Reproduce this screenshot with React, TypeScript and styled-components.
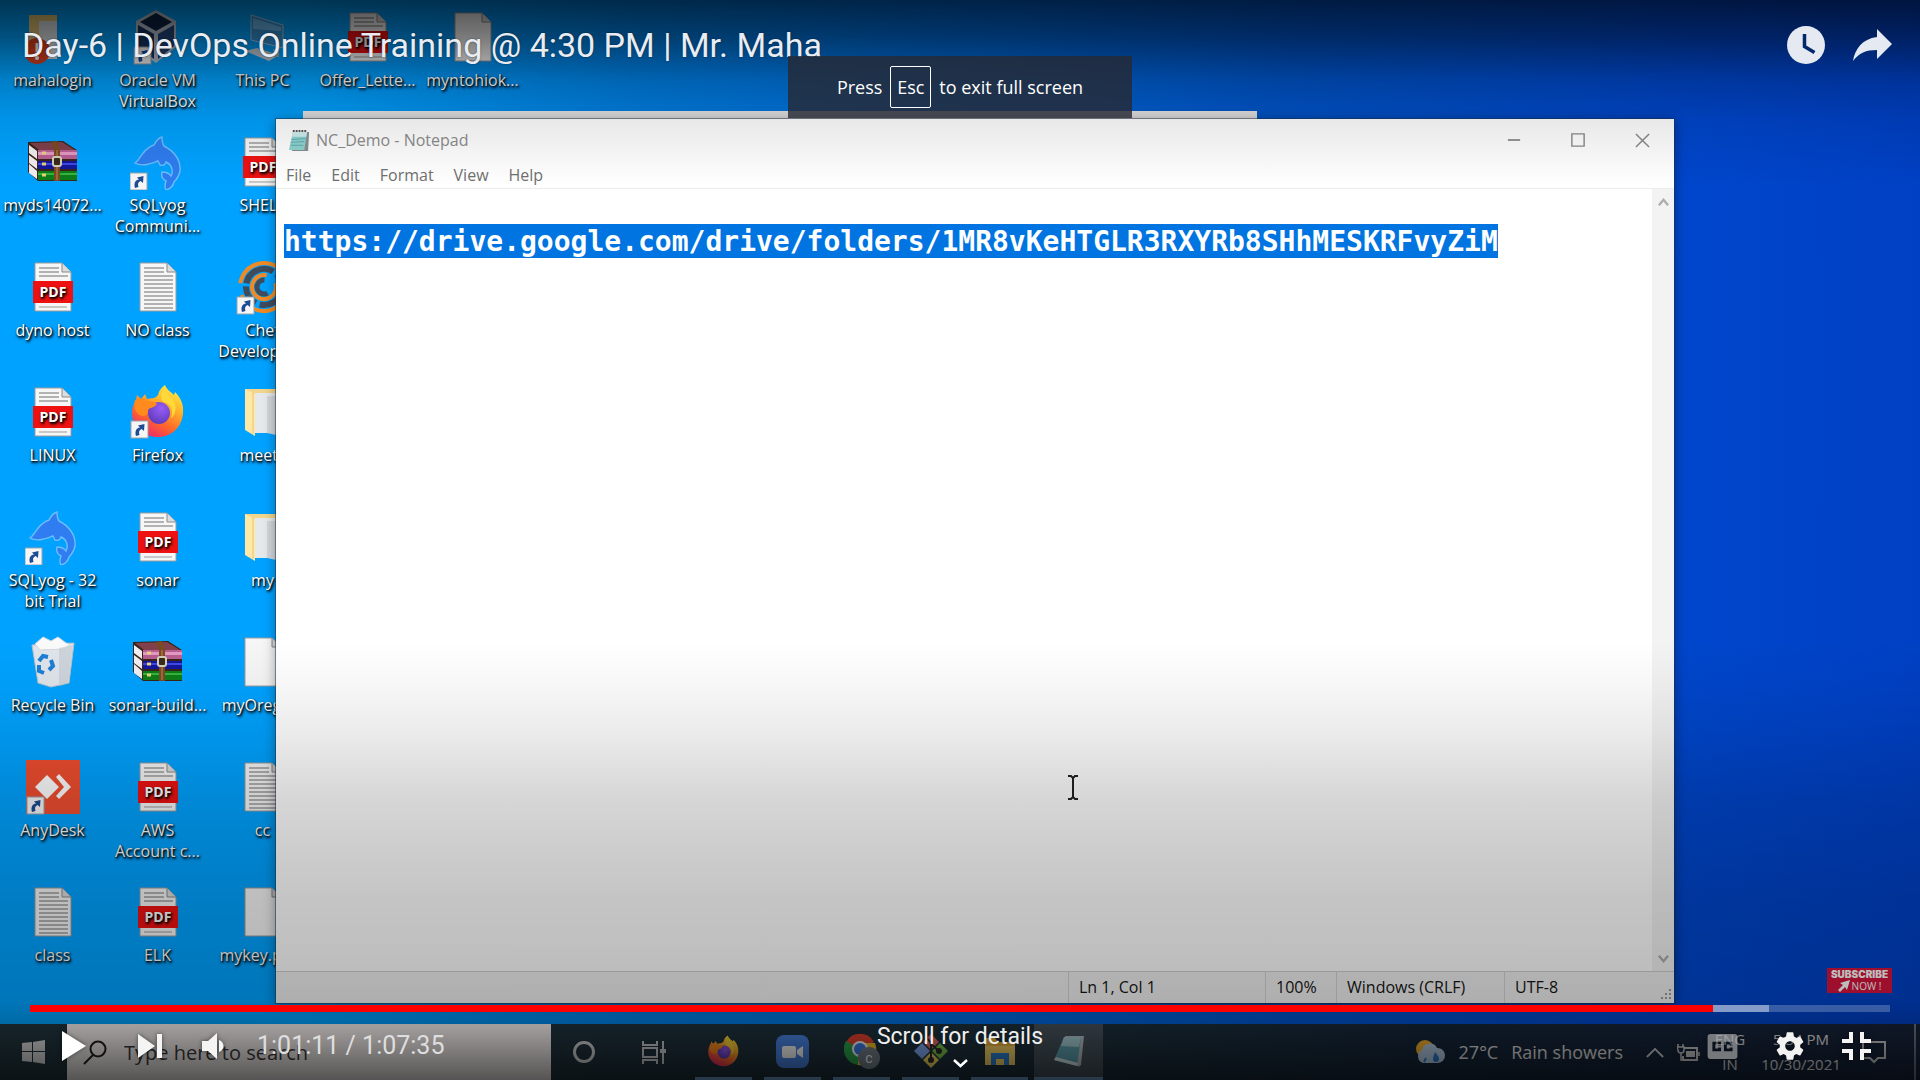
import React from "react";
import styled, { createGlobalStyle, css } from "styled-components";

const UI_FONT = `"Open Sans", "Noto Sans", sans-serif`;
const PLAYER_FONT = `Roboto, "Liberation Sans", sans-serif`;
const MONO_FONT = `"DejaVu Sans Mono", "Liberation Mono", monospace`;

const GlobalStyle = createGlobalStyle`
  * { box-sizing: border-box; }
  body { margin: 0; background: #000; font-family: ${UI_FONT}; }
  button, input, textarea { font: inherit; color: inherit; }
  button { border: 0; padding: 0; background: none; cursor: pointer; }
`;

const Screen = styled.main`
  position: relative;
  display: flex;
  flex-direction: column;
  height: 100vh;
  overflow: hidden;
`;

/* ---------- Desktop ---------- */

const Desktop = styled.section`
  position: relative;
  flex: 1;
  min-height: 0;
  overflow: hidden;
  background: linear-gradient(
    to right,
    #00a2ff 0%,
    #00a2ff 16%,
    #0080e4 33%,
    #006bdc 50%,
    #0055cc 67%,
    #0046cc 88%,
    #0040c4 100%
  );
`;

const IconGrid = styled.div`
  display: flex;
  align-items: flex-start;
  padding-top: 9px;
`;

const IconColumn = styled.div`
  display: grid;
  grid-auto-rows: 125px;
  width: 105px;
`;

const Shortcut = styled.button`
  display: flex;
  flex-direction: column;
  align-items: center;
  justify-content: flex-start;
  gap: 5px;
  color: #fff;
  font-size: 16px;
  line-height: 21px;
  text-shadow: 1px 1px 2px #000, 1px 2px 3px #000;
  svg { display: block; flex: none; }
`;

const ShortcutLabel = styled.span`
  white-space: pre;
  text-align: center;
`;

/* ---------- Windows ---------- */

const BackWindow = styled.div`
  position: absolute;
  left: 303px;
  right: 663px;
  top: 111px;
  bottom: 40px;
  background: #ececec;
`;

const NotepadWindow = styled.section`
  position: absolute;
  left: 276px;
  right: 246px;
  top: 119px;
  bottom: 21px;
  display: flex;
  flex-direction: column;
  background: #fff;
  box-shadow: 0 0 0 1px rgba(30, 50, 70, 0.5), 0 2px 12px rgba(0, 0, 0, 0.4);
`;

const TitleBar = styled.header`
  display: flex;
  align-items: center;
  height: 42px;
  padding-left: 12px;
  gap: 5px;
  color: #8c8c8c;
`;

const WindowTitle = styled.h2`
  margin: 0;
  flex: 1;
  font-size: 16px;
  font-weight: 400;
`;

const WindowControls = styled.div`
  display: flex;
  align-self: stretch;
`;

const WindowButton = styled.button`
  display: grid;
  place-items: center;
  width: 64px;
  color: #8a8a8a;
`;

const MenuBar = styled.nav`
  display: flex;
  align-items: center;
  height: 28px;
  padding-left: 10px;
  gap: 20px;
  border-bottom: 1px solid #ececec;
  color: #707070;
  font-size: 16px;
  line-height: 26px;
`;

const EditorArea = styled.div`
  flex: 1;
  display: flex;
  align-items: stretch;
  min-height: 0;
`;

const EditorPage = styled.div`
  flex: 1;
  min-width: 0;
  padding: 35px 0 0 8px;
`;

const EditorText = styled.textarea`
  display: block;
  field-sizing: content;
  max-width: 100%;
  height: 34px;
  margin: 0;
  padding: 0;
  border: 0;
  outline: 0;
  resize: none;
  overflow: hidden;
  white-space: pre;
  background: #0074e0;
  color: #fff;
  font-family: ${MONO_FONT};
  font-size: 28px;
  font-weight: 700;
  line-height: 36px;
`;

const ScrollTrack = styled.div`
  display: flex;
  flex-direction: column;
  justify-content: space-between;
  width: 22px;
  background: #f3f3f3;
`;

const ScrollButton = styled.button`
  display: grid;
  place-items: center;
  height: 26px;
  color: #adadad;
`;

const StatusBar = styled.footer`
  position: relative;
  display: flex;
  justify-content: flex-end;
  height: 32px;
  border-top: 1px solid #cfcfcf;
  background: #f0f0f0;
  color: #151515;
  font-size: 16px;
  line-height: 31px;
`;

const StatusCell = styled.span<{ $width: number }>`
  width: ${(p) => p.$width}px;
  padding-left: 10px;
  border-left: 1px solid #d4d4d4;
`;

const ResizeGrip = styled.svg`
  position: absolute;
  right: 2px;
  bottom: 2px;
`;

const SubscribeBadge = styled.button`
  position: absolute;
  right: 28px;
  bottom: 31px;
  display: flex;
  flex-direction: column;
  align-items: center;
  width: 65px;
  height: 25px;
  background: #d6143c;
  color: #fff;
  font-size: 10px;
  line-height: 12px;
  strong {
    font-family: Inter, sans-serif;
    font-weight: 900;
  }
  span { display: flex; align-items: center; gap: 2px; }
`;

const TextCursor = styled.svg`
  position: absolute;
  left: 1067px;
  top: 775px;
`;

/* ---------- Taskbar ---------- */

const Taskbar = styled.footer`
  display: flex;
  align-items: stretch;
  height: 56px;
  background: linear-gradient(to right, #22363f 0%, #1d303c 55%, #15263a 75%, #17243c 100%);
  color: #e6e6e6;
`;

const TaskButton = styled.button<{ $width: number }>`
  display: grid;
  place-items: center;
  width: ${(p) => p.$width}px;
`;

const AppButton = styled.button<{ $active?: boolean }>`
  position: relative;
  display: grid;
  place-items: center;
  width: 69px;
  padding-bottom: 2px;
  background: ${(p) => (p.$active ? "#46535c" : "transparent")};
  &::after {
    content: "";
    position: absolute;
    bottom: 0;
    left: ${(p) => (p.$active ? 0 : 6)}px;
    right: ${(p) => (p.$active ? 0 : 6)}px;
    height: 3px;
    background: #6fa0d0;
  }
`;

const SearchBox = styled.label`
  display: flex;
  align-items: center;
  gap: 16px;
  width: 484px;
  padding-left: 16px;
  background: #fbf4f4;
  color: #2a2a2a;
  input {
    flex: 1;
    min-width: 0;
    border: 0;
    outline: 0;
    padding: 0;
    background: transparent;
    font-size: 20px;
  }
  input::placeholder { color: #3c3c3c; opacity: 1; }
`;

const Tray = styled.div`
  display: flex;
  align-items: stretch;
  margin-left: auto;
`;

const Weather = styled.button`
  display: flex;
  align-items: center;
  gap: 13px;
  padding-right: 16px;
  font-size: 18px;
`;

const TrayStack = styled.button<{ $width: number }>`
  display: flex;
  flex-direction: column;
  align-items: center;
  justify-content: center;
  width: ${(p) => p.$width}px;
  font-size: 15px;
  line-height: 25px;
  white-space: nowrap;
`;

const ShowDesktop = styled.button`
  width: 6px;
  margin-left: 14px;
  border-left: 2px solid #6c7480;
`;

/* ---------- Player chrome ---------- */

const scrim = css`
  position: absolute;
  left: 0;
  right: 0;
  pointer-events: none;
`;

const TopScrim = styled.div`
  ${scrim}
  top: 0;
  height: 186px;
  background: linear-gradient(
    to bottom,
    rgba(0, 0, 0, 0.68) 0%,
    rgba(0, 0, 0, 0.5) 20%,
    rgba(0, 0, 0, 0.22) 43%,
    rgba(0, 0, 0, 0.09) 64%,
    rgba(0, 0, 0, 0) 100%
  );
`;

const BottomScrim = styled.div`
  ${scrim}
  bottom: 0;
  height: 440px;
  background: linear-gradient(
    to bottom,
    rgba(0, 0, 0, 0) 0%,
    rgba(0, 0, 0, 0.03) 10%,
    rgba(0, 0, 0, 0.08) 21%,
    rgba(0, 0, 0, 0.16) 36%,
    rgba(0, 0, 0, 0.23) 59%,
    rgba(0, 0, 0, 0.27) 82%,
    rgba(0, 0, 0, 0.36) 88%,
    rgba(0, 0, 0, 0.66) 100%
  );
`;

const PlayerTop = styled.header`
  position: absolute;
  left: 0;
  right: 0;
  top: 0;
  display: flex;
  align-items: center;
  justify-content: space-between;
  height: 90px;
  padding: 0 28px 0 22px;
  color: #e9edf3;
  font-family: ${PLAYER_FONT};
`;

const VideoTitle = styled.h1`
  margin: 0;
  font-size: 34px;
  font-weight: 400;
  line-height: 40px;
  text-shadow: 0 0 2px rgba(0, 0, 0, 0.5);
`;

const TopActions = styled.div`
  display: flex;
  align-items: center;
  gap: 28px;
  button { display: grid; place-items: center; }
`;

const ExitHint = styled.div`
  position: absolute;
  left: 50%;
  top: 56px;
  transform: translateX(-50%);
  display: flex;
  align-items: center;
  justify-content: center;
  gap: 8px;
  width: 344px;
  height: 62px;
  background: rgba(38, 42, 52, 0.82);
  color: #fff;
  font-size: 18px;
  white-space: nowrap;
  kbd {
    display: grid;
    place-items: center;
    width: 41px;
    height: 42px;
    border: 1px solid #fff;
    border-radius: 2px;
    font: inherit;
  }
`;

const PlayerBottom = styled.div`
  position: absolute;
  left: 0;
  right: 0;
  bottom: 0;
  display: flex;
  flex-direction: column;
  padding: 0 30px;
  color: #eee;
  font-family: ${PLAYER_FONT};
`;

const SeekBar = styled.input<{ $played: number; $buffered: number }>`
  appearance: none;
  display: block;
  width: 100%;
  height: 7px;
  margin: 0;
  background: linear-gradient(
    to right,
    #f00 ${(p) => p.$played}%,
    rgba(255, 255, 255, 0.52) ${(p) => p.$played}% ${(p) => p.$buffered}%,
    rgba(255, 255, 255, 0.22) ${(p) => p.$buffered}%
  );
  &::-webkit-slider-thumb { appearance: none; width: 0; height: 0; }
`;

const ControlRow = styled.div`
  display: grid;
  grid-template-columns: 1fr auto 1fr;
  align-items: center;
  height: 68px;
`;

const ControlGroup = styled.div<{ $end?: boolean }>`
  display: flex;
  align-items: center;
  justify-content: ${(p) => (p.$end ? "flex-end" : "flex-start")};
`;

const ControlButton = styled.button<{ $width: number }>`
  display: grid;
  place-items: center;
  width: ${(p) => p.$width}px;
  height: 48px;
  filter: drop-shadow(0 0 2px rgba(0, 0, 0, 0.5));
`;

const TimeText = styled.span`
  margin-left: 13px;
  font-size: 25px;
  line-height: 32px;
  color: #dedede;
`;

const ScrollHint = styled.button`
  display: flex;
  flex-direction: column;
  align-items: center;
  gap: 6px;
  padding-bottom: 4px;
  font-size: 23px;
  line-height: 32px;
`;

/* ---------- Icon drawings ---------- */

const ShortcutArrow = ({ x = 0, y = 34 }: { x?: number; y?: number }) => (
  <g transform={`translate(${x} ${y})`}>
    <rect width="17" height="17" fill="#f6f6f6" stroke="#9aa4ae" strokeWidth="1" />
    <path d="M5 15c-1.500-5 .5-8 4-8.500L7 4.500 13.500 3l-.5 7-2.300-2C8 9 7.500 11 8.500 14z" fill="#1e4c94" />
  </g>
);

const Paper = ({ lines = 0 }: { lines?: number }) => (
  <>
    <path d="M10 4h27l9 9v39H10z" fill="#f6f6f6" stroke="#9c9c9c" />
    <path d="M37 4v9h9" fill="#dcdcdc" stroke="#8a8a8a" />
    {Array.from({ length: lines }, (_, i) => (
      <path key={i} d={`M14 ${9 + i * 4}H${i < 2 ? 34 : 43}`} stroke="#8d8d8d" strokeWidth="1.300" />
    ))}
  </>
);

const PdfArt = () => (
  <>
    <Paper lines={3} />
    <path d="M14 48h28" stroke="#999" />
    <rect x="8" y="22" width="40" height="22" fill="#ee1111" />
    <text x="28" y="38" textAnchor="middle" fontSize="14" fontWeight="700" fill="#fff" fontFamily={UI_FONT}>
      PDF
    </text>
  </>
);

const RarArt = () => (
  <>
    <path d="M3 8 38 7l14 9v31H13L3 38z" fill="#3b2419" />
    <path d="M5 9 37 8l13 8H14z" fill="#80404c" />
    <path d="M13 16h39v9H13z" fill="#b85f92" />
    <path d="M13 18h39v3H13z" fill="#e39ac4" />
    <path d="M13 27h39v8H13z" fill="#14179c" />
    <path d="M13 29h39v2H13z" fill="#3f49e0" />
    <path d="M13 37h39v9H13z" fill="#0d7d18" />
    <path d="M13 39h39v2H13z" fill="#35b53e" />
    <path d="m4 11 8 6v8l-8-6zM4 21l8 6v8l-8-6zM4 30l8 7v8l-8-6z" fill="#f3eef2" />
    <path d="M17 19h4M17 30h4M17 41h4" stroke="#e8d27a" strokeWidth="3" />
    <path d="m26 8 6-1 3 9v31h-6V16z" fill="#7a4a24" />
    <path d="M32 16v30" stroke="#c08a4c" strokeWidth="1" />
    <rect x="28" y="23" width="8" height="9" rx="2" fill="#3a2a1c" stroke="#d6d0bd" strokeWidth="2" />
  </>
);

const DolphinArt = () => (
  <>
    <path
      d="M5 29C11 25 12 15 24 11c2-4 4-7 8-8 0 3 0 6 2 9 10 5 17 14 16 25-1 5-3 8-6 11-1 4-4 7-8 8-2-3-1-6 0-9-4-2-5-5-4-9 4 0 7 1 9 4 3-6 0-12-5-14-1 3-3 4-6 3l-2-4C19 30 12 33 5 29z"
      fill="#2f7df0"
      stroke="#6dbdff"
      strokeWidth="1.400"
    />
    <ShortcutArrow x={0} y={39} />
  </>
);

const FolderArt = () => (
  <>
    <path d="M10 5h34v40H10z" fill="#f3d68c" />
    <path d="M20 9h26v40H20z" fill="#e6e9eb" />
    <path d="M32 12h14v40l-14-3z" fill="#d3d7db" />
    <path d="M10 5l10 5v42L10 46z" fill="#ffe7a6" />
    <path d="M18 9v41" stroke="#e4c674" />
  </>
);

const FirefoxArt = ({ id }: { id: string }) => (
  <>
    <defs>
      <linearGradient id={`${id}-body`} x1="0.8" y1="0" x2="0.25" y2="1">
        <stop offset="0" stopColor="#fff044" />
        <stop offset="0.350" stopColor="#ffb02a" />
        <stop offset="0.650" stopColor="#ff6a2a" />
        <stop offset="1" stopColor="#f0206e" />
      </linearGradient>
      <radialGradient id={`${id}-globe`} cx="0.6" cy="0.3" r="0.8">
        <stop offset="0" stopColor="#9a5cf5" />
        <stop offset="1" stopColor="#5638b8" />
      </radialGradient>
    </defs>
    <path
      d="M35 1c2 5 5 6 9 10l1-3c6 6 9 13 8 21-1 14-11 24-25 24S2 43 2 29c0-6 2-10 4-13l1-5 4 4 4-5 2 5c4-1 8 0 11-4 1-5 4-8 7-10z"
      fill={`url(#${id}-body)`}
    />
    <circle cx="29" cy="29" r="11" fill={`url(#${id}-globe)`} />
    <path d="M5 16c4-2 9-2 13 1 3 0 6 0 9 3-2 3-6 4-9 5 0 4-1 6-4 7C6 32 3 24 5 16z" fill="#ff8a1e" />
    <path d="M33 18c8 1 11 8 8 16 6-4 7-16-2-22-3-3-4-5-4-9-4 4-5 10-2 15z" fill="#ffd83a" />
  </>
);

const ART: Record<string, React.ReactNode> = {
  pdf: <PdfArt />,
  doc: <Paper lines={11} />,
  blank: <Paper />,
  rar: <RarArt />,
  dolphin: <DolphinArt />,
  folder: <FolderArt />,
  login: (
    <>
      <path d="M4 6h28v40H4z" fill="#e8c878" />
      <path d="M14 12h18v38H14z" fill="#dfe3e6" />
      <circle cx="12" cy="42" r="13" fill="#d8401f" />
      <path d="M12 34v9" stroke="#fff" strokeWidth="3" />
      <circle cx="12" cy="49" r="2" fill="#fff" />
    </>
  ),
  vbox: (
    <>
      <path d="m6 12 20-11 20 11v26L26 54 6 40z" fill="#b9c4d2" />
      <path d="m10 13 16-9 16 9-16 9z" fill="#0d2346" />
      <path d="m8 16 16 9v25L8 38z" fill="#173566" />
      <path d="m28 25 16-9v21L28 50z" fill="#24477f" />
      <ShortcutArrow x={4} y={38} />
    </>
  ),
  pc: (
    <>
      <path d="m16 6 32 10v23L16 31z" fill="#3793d4" stroke="#9ccbe8" />
      <path d="m18 9 28 9v4L18 20z" fill="#6ab8ea" />
      <path d="m10 42 12-3 22 7-10 6z" fill="#c8d4dc" />
      <path d="M38 40h6v8h-6z" fill="#9fb2bf" />
    </>
  ),
  chef: (
    <>
      <circle cx="29" cy="28" r="24" fill="none" stroke="#f08a24" strokeWidth="4" strokeDasharray="44 12 26 8" transform="rotate(198 29 28)" />
      <circle cx="29" cy="28" r="18" fill="none" stroke="#3f4c5c" strokeWidth="6" strokeDasharray="10 3 34 4" transform="rotate(150 29 28)" />
      <circle cx="29" cy="28" r="12" fill="none" stroke="#f08a24" strokeWidth="4" strokeDasharray="36 12" transform="rotate(110 29 28)" />
      <circle cx="29" cy="28" r="7" fill="none" stroke="#3f4c5c" strokeWidth="5" strokeDasharray="26 18" transform="rotate(60 29 28)" />
      <ShortcutArrow x={2} y={38} />
    </>
  ),
  firefox: (
    <>
      <FirefoxArt id="desk" />
      <ShortcutArrow x={1} y={37} />
    </>
  ),
  bin: (
    <>
      <path d="m7 11 42-2-5 40-18 4-13-4z" fill="#dfe5ea" stroke="#b4c1cc" />
      <path d="m10 10 8-7 8 4 7-4 8 6 4 1-6 5-24 1z" fill="#fafafa" stroke="#d2d8dd" />
      <path d="m34 14 14-3-5 38-9 3z" fill="#c5cdd4" opacity=".7" />
      <g fill="none" stroke="#1c7fd6" strokeWidth="4">
        <path d="m14 27 4-5 5 1" />
        <path d="m26 26 2 6-4 4" />
        <path d="m19 39-5-2v-6" />
      </g>
    </>
  ),
  anydesk: (
    <>
      <rect x="1" y="1" width="54" height="54" fill="#f04e30" />
      <path d="m22 16 12 12-12 12L10 28z" fill="#fff" />
      <path d="m31 18 3-3 12 13-12 12-3-3 8-9z" fill="#fff" />
      <ShortcutArrow x={2} y={38} />
    </>
  ),
};

const COLUMNS: { art: string; label: string }[][] = [
  [
    { art: "login", label: "mahalogin" },
    { art: "rar", label: "myds14072..." },
    { art: "pdf", label: "dyno host" },
    { art: "pdf", label: "LINUX" },
    { art: "dolphin", label: "SQLyog - 32\nbit Trial" },
    { art: "bin", label: "Recycle Bin" },
    { art: "anydesk", label: "AnyDesk" },
    { art: "doc", label: "class" },
  ],
  [
    { art: "vbox", label: "Oracle VM\nVirtualBox" },
    { art: "dolphin", label: "SQLyog\nCommuni..." },
    { art: "doc", label: "NO class" },
    { art: "firefox", label: "Firefox" },
    { art: "pdf", label: "sonar" },
    { art: "rar", label: "sonar-build..." },
    { art: "pdf", label: "AWS\nAccount c..." },
    { art: "pdf", label: "ELK" },
  ],
  [
    { art: "pc", label: "This PC" },
    { art: "pdf", label: "SHELL" },
    { art: "chef", label: "Chef\nDevelopm..." },
    { art: "folder", label: "meets" },
    { art: "folder", label: "my" },
    { art: "blank", label: "myOrego..." },
    { art: "doc", label: "cc" },
    { art: "blank", label: "mykey.pem" },
  ],
  [{ art: "pdf", label: "Offer_Lette..." }],
  [{ art: "blank", label: "myntohiok..." }],
];

const NotepadGlyph = ({ size }: { size: number }) => (
  <svg width={size} height={size} viewBox="0 0 24 24" aria-hidden="true">
    <path d="M6 3h16l-1 20H4z" fill="#8a8f8f" />
    <path d="M5 3h15l-3 19H1z" fill="#8fd3d0" />
    <path d="M5 3h15l-1 5H4z" fill="#cdeeed" />
    <path d="m4 11 14-1M3 14l14-1M3 17h13" stroke="#5faeb0" />
    <path d="M5 2h15" stroke="#555" strokeWidth="2" strokeDasharray="2 1" />
  </svg>
);

const Chevron = ({ up, size = 11 }: { up?: boolean; size?: number }) => (
  <svg width={size} height={size} viewBox="0 0 12 12" fill="none" stroke="currentColor" strokeWidth="2.500" aria-hidden="true">
    <path d={up ? "m1 9 5-6 5 6" : "m1 3 5 6 5-6"} />
  </svg>
);

/* ---------- Sections ---------- */

const DesktopIcons = () => (
  <IconGrid>
    {COLUMNS.map((column, c) => (
      <IconColumn key={c}>
        {column.map(({ art, label }) => (
          <Shortcut key={label} type="button">
            <svg width="56" height="56" viewBox="0 0 56 56" aria-hidden="true">
              {ART[art]}
            </svg>
            <ShortcutLabel>{label}</ShortcutLabel>
          </Shortcut>
        ))}
      </IconColumn>
    ))}
  </IconGrid>
);

const Notepad = () => (
  <NotepadWindow>
    <TitleBar>
      <NotepadGlyph size={23} />
      <WindowTitle>NC_Demo - Notepad</WindowTitle>
      <WindowControls>
        <WindowButton type="button" aria-label="Minimize">
          <svg width="14" height="14" viewBox="0 0 16 16" stroke="currentColor" strokeWidth="2"><path d="M1 8h14" /></svg>
        </WindowButton>
        <WindowButton type="button" aria-label="Maximize">
          <svg width="14" height="14" viewBox="0 0 16 16" fill="none" stroke="currentColor" strokeWidth="1.600"><path d="M1 1h14v14H1z" /></svg>
        </WindowButton>
        <WindowButton type="button" aria-label="Close">
          <svg width="15" height="15" viewBox="0 0 16 16" stroke="currentColor" strokeWidth="1.600"><path d="m1 1 14 14M15 1 1 15" /></svg>
        </WindowButton>
      </WindowControls>
    </TitleBar>
    <MenuBar>
      {["File", "Edit", "Format", "View", "Help"].map((item) => (
        <button key={item} type="button">{item}</button>
      ))}
    </MenuBar>
    <EditorArea>
      <EditorPage>
        <EditorText
          aria-label="Document text"
          rows={1}
          spellCheck={false}
          defaultValue="https://drive.google.com/drive/folders/1MR8vKeHTGLR3RXYRb8SHhMESKRFvyZiM"
        />
      </EditorPage>
      <ScrollTrack>
        <ScrollButton type="button" aria-label="Scroll up"><Chevron up /></ScrollButton>
        <ScrollButton type="button" aria-label="Scroll down"><Chevron /></ScrollButton>
      </ScrollTrack>
    </EditorArea>
    <StatusBar>
      <StatusCell $width={197}>Ln 1, Col 1</StatusCell>
      <StatusCell $width={71}>100%</StatusCell>
      <StatusCell $width={168}>Windows (CRLF)</StatusCell>
      <StatusCell $width={170}>UTF-8</StatusCell>
      <ResizeGrip width="12" height="12" viewBox="0 0 12 12" fill="#9a9a9a">
        <path d="M9 0h2v2H9zM9 4h2v2H9zM9 8h2v2H9zM5 4h2v2H5zM5 8h2v2H5zM1 8h2v2H1z" />
      </ResizeGrip>
    </StatusBar>
  </NotepadWindow>
);

const TaskbarRow = () => (
  <Taskbar>
    <TaskButton type="button" $width={67} aria-label="Start">
      <svg width="23" height="24" viewBox="0 0 23 24" fill="#e0e0e0">
        <path d="m0 3 10-1v9H0zM11 2l12-2v11H11zM0 12h10v10L0 21zM11 12h12v12l-12-2z" />
      </svg>
    </TaskButton>
    <SearchBox>
      <svg width="25" height="25" viewBox="0 0 25 25" fill="none" stroke="#222" strokeWidth="2" aria-hidden="true">
        <circle cx="15" cy="9" r="7.500" />
        <path d="M10 15 1 24" />
      </svg>
      <input type="text" placeholder="Type here to search" aria-label="Search" />
    </SearchBox>
    <TaskButton type="button" $width={66} aria-label="Cortana">
      <svg width="24" height="24" viewBox="0 0 24 24" fill="none" stroke="#d8d8d8" strokeWidth="3"><circle cx="12" cy="12" r="9.500" /></svg>
    </TaskButton>
    <TaskButton type="button" $width={72} aria-label="Task view">
      <svg width="25" height="23" viewBox="0 0 25 23" fill="none" stroke="#d0d0d0" strokeWidth="2">
        <path d="M2 0v4h14V0M2 7h14v9H2zM2 23v-4h14v4M22 0v23" />
        <path d="M19 10h6" strokeWidth="4" />
      </svg>
    </TaskButton>
    <AppButton type="button" aria-label="Firefox">
      <svg width="33" height="33" viewBox="0 0 56 56"><FirefoxArt id="task" /></svg>
    </AppButton>
    <AppButton type="button" aria-label="Zoom">
      <svg width="33" height="33" viewBox="0 0 33 33">
        <rect width="33" height="33" rx="8" fill="#4a86e8" />
        <rect x="6" y="11" width="14" height="12" rx="2" fill="#fff" />
        <path d="m21 15 6-4v12l-6-4z" fill="#fff" />
      </svg>
    </AppButton>
    <AppButton type="button" aria-label="Chrome">
      <svg width="36" height="36" viewBox="0 0 36 36">
        <path d="M16 16 2 9a16 16 0 0 1 28 0z" fill="#e8432f" />
        <path d="M16 16 2 8a16 16 0 0 0 12 24z" fill="#2ca94c" />
        <path d="M16 16h-2v16A16 16 0 0 0 31 10H16z" fill="#fbc82a" />
        <circle cx="16" cy="16" r="8" fill="#fff" />
        <circle cx="16" cy="16" r="6" fill="#3d7fee" />
        <circle cx="25" cy="25" r="11" fill="#76828c" />
        <text x="25" y="30" textAnchor="middle" fontSize="14" fill="#fff" fontFamily={PLAYER_FONT}>c</text>
      </svg>
    </AppButton>
    <AppButton type="button" aria-label="Git">
      <svg width="34" height="34" viewBox="0 0 34 34">
        <path d="m17 0 8 8-8 8-8-8z" fill="#ea6a66" />
        <path d="m8 9 8 8-8 8-8-8z" fill="#83aef8" />
        <path d="m26 9 8 8-8 8-8-8z" fill="#7cc74e" />
        <path d="m17 18 8 8-8 8-8-8z" fill="#f2dc62" />
        <path d="M13 4v0l4 5v17M17 10l8 7" stroke="#2b2b2b" strokeWidth="2" fill="none" />
        <circle cx="17" cy="26" r="3" fill="#2b2b2b" />
        <circle cx="25" cy="17" r="3" fill="#2b2b2b" />
      </svg>
    </AppButton>
    <AppButton type="button" aria-label="File Explorer">
      <svg width="30" height="30" viewBox="0 0 30 30">
        <path d="M0 2h10l3 4h17v23H0z" fill="#f2b63c" />
        <path d="M0 10h30v19H0z" fill="#ffd968" />
        <path d="M6 29V17h18v12h-5v-6h-8v6z" fill="#2f86d8" />
      </svg>
    </AppButton>
    <AppButton type="button" aria-label="Notepad" $active>
      <svg width="30" height="34" viewBox="0 0 30 34">
        <path d="M11 2h19l-3 29-3 2z" fill="#b9c4c6" />
        <path d="M10 3h17l-4 29L0 26z" fill="#5fa6b3" />
        <path d="M10 3h17l-2 10-18-1z" fill="#a9d3d8" />
        <path d="M0 26l23 6 1-3L2 23z" fill="#dbeff0" />
      </svg>
    </AppButton>
    <Tray>
      <Weather type="button">
        <svg width="31" height="26" viewBox="0 0 31 26" aria-hidden="true">
          <circle cx="10" cy="10" r="9" fill="#f9b730" />
          <path d="M8 24a7 7 0 0 1-1-13 8 8 0 0 1 15-2 7 7 0 1 1 1 15z" fill="#b8d2ea" />
          <path d="M20 13c3 4 4 5 4 7a3 3 0 0 1-6 0c0-2 1-4 2-7z" fill="#2c7fd4" />
          <path d="m11 19-2 4" stroke="#2c7fd4" strokeWidth="2" />
        </svg>
        <span>27°C</span>
        <span>Rain showers</span>
      </Weather>
      <TaskButton type="button" $width={31} aria-label="Show hidden icons">
        <svg width="18" height="11" viewBox="0 0 20 12" fill="none" stroke="#d8d8d8" strokeWidth="2"><path d="m1 11 9-9 9 9" /></svg>
      </TaskButton>
      <TaskButton type="button" $width={36} aria-label="Battery">
        <svg width="23" height="17" viewBox="0 0 23 17" fill="none" stroke="#cfcfcf" strokeWidth="2">
          <path d="M7 4h13v12H6v-4" />
          <path d="M9 7h9v6H9z" fill="#cfcfcf" stroke="none" />
          <path d="M22 8v4M1 0v3M6 0v3M0 3h7v3a3 3 0 0 1-6 0zM4 9v7h3" strokeWidth="1.500" />
        </svg>
      </TaskButton>
      <TrayStack type="button" $width={48}>
        <span>ENG</span>
        <span>IN</span>
      </TrayStack>
      <TrayStack type="button" $width={94}>
        <span>5:34 PM</span>
        <span>10/30/2021</span>
      </TrayStack>
      <TaskButton type="button" $width={52} aria-label="Notifications">
        <svg width="24" height="23" viewBox="0 0 24 23" fill="none" stroke="#cfcfcf" strokeWidth="2"><path d="M1 1h22v16h-7l-4 4-4-4H1z" /></svg>
      </TaskButton>
      <ShowDesktop type="button" aria-label="Show desktop" />
    </Tray>
  </Taskbar>
);

const PlayerControls = () => (
  <PlayerBottom>
    <SeekBar type="range" aria-label="Seek" min={0} max={4055} defaultValue={3671} $played={90.5} $buffered={93.5} />
    <ControlRow>
      <ControlGroup>
        <ControlButton type="button" $width={88} aria-label="Play">
          <svg width="24" height="30" viewBox="0 0 24 30" fill="#fff"><path d="M0 0l24 15L0 30z" /></svg>
        </ControlButton>
        <ControlButton type="button" $width={64} aria-label="Next">
          <svg width="24" height="24" viewBox="0 0 24 24" fill="#f4f4f4"><path d="M0 0l17 12L0 24zM19 0h5v24h-5z" /></svg>
        </ControlButton>
        <ControlButton type="button" $width={62} aria-label="Mute">
          <svg width="22" height="26" viewBox="0 0 22 26" fill="#f4f4f4"><path d="M0 8h6l9-8v26l-9-8H0zM17 7c6 2 6 10 0 12z" /></svg>
        </ControlButton>
        <TimeText>1:01:11 / 1:07:35</TimeText>
      </ControlGroup>
      <ScrollHint type="button">
        Scroll for details
        <svg width="15" height="9" viewBox="0 0 15 9" fill="none" stroke="#fff" strokeWidth="2.500"><path d="m1 1 6.500 6L14 1" /></svg>
      </ScrollHint>
      <ControlGroup $end>
        <ControlButton type="button" $width={68} aria-label="Subtitles">
          <svg width="31" height="25" viewBox="0 0 31 26" opacity=".55">
            <path
              fillRule="evenodd"
              fill="#d0d0d0"
              d="M3 0h25a3 3 0 0 1 3 3v20a3 3 0 0 1-3 3H3a3 3 0 0 1-3-3V3a3 3 0 0 1 3-3zM5 8v10h9v-4h-3v1H8v-4h3v1h3V8zM17 8v10h9v-4h-3v1h-3v-4h3v1h3V8z"
            />
          </svg>
        </ControlButton>
        <ControlButton type="button" $width={67} aria-label="Settings">
          <svg width="30" height="30" viewBox="1 1 22 22" fill="#f2f2f2">
            <path d="M19.430 12.980c.04-.32.07-.64.07-.98s-.03-.66-.07-.98l2.110-1.650c.19-.15.24-.42.12-.64l-2-3.460c-.12-.22-.39-.3-.61-.22l-2.490 1c-.52-.4-1.080-.73-1.690-.98l-.38-2.650A.488.488 0 0 0 14 2h-4c-.25 0-.46.18-.49.42l-.38 2.650c-.61.25-1.170.59-1.690.98l-2.490-1c-.23-.09-.49 0-.61.22l-2 3.460c-.13.22-.07.49.12.64l2.110 1.650c-.04.32-.07.65-.07.98s.03.66.07.98l-2.110 1.650c-.19.15-.24.42-.12.64l2 3.460c.12.22.39.3.61.22l2.490-1c.52.4 1.080.73 1.690.98l.38 2.650c.03.24.24.42.49.42h4c.25 0 .46-.18.49-.42l.38-2.650c.61-.25 1.170-.59 1.690-.98l2.490 1c.23.09.49 0 .61-.22l2-3.460c.12-.22.07-.49-.12-.64zM12 15.500c-1.930 0-3.500-1.570-3.500-3.500s1.570-3.500 3.500-3.500 3.500 1.570 3.500 3.500-1.570 3.500-3.500 3.500z" />
          </svg>
        </ControlButton>
        <ControlButton type="button" $width={67} aria-label="Exit full screen">
          <svg width="29" height="28" viewBox="0 0 29 28" fill="none" stroke="#f4f4f4" strokeWidth="4">
            <path d="M9 0v9H0M20 0v9h9M9 28v-9H0M20 28v-9h9" />
          </svg>
        </ControlButton>
      </ControlGroup>
    </ControlRow>
  </PlayerBottom>
);

export default function App() {
  return (
    <>
      <GlobalStyle />
      <Screen>
        <Desktop>
          <DesktopIcons />
          <BackWindow />
          <Notepad />
          <SubscribeBadge type="button">
            <strong>SUBSCRIBE</strong>
            <span>
              <svg width="12" height="12" viewBox="0 0 12 12" fill="#fff" aria-hidden="true"><path d="M12 0 9 10 7 7l-5 5-2-2 5-5-3-2z" /></svg>
              NOW !
            </span>
          </SubscribeBadge>
          <TextCursor width="12" height="25" viewBox="0 0 12 25" fill="none" stroke="#222" strokeWidth="2" aria-hidden="true">
            <path d="M1 1h3l2 2 2-2h3M6 2v21M1 24h3l2-2 2 2h3" />
          </TextCursor>
        </Desktop>
        <TaskbarRow />
        <TopScrim />
        <BottomScrim />
        <PlayerTop>
          <VideoTitle>Day-6 | DevOps Online Training @ 4:30 PM | Mr. Maha</VideoTitle>
          <TopActions>
            <button type="button" aria-label="Watch later">
              <svg width="38" height="38" viewBox="0 0 38 38">
                <circle cx="19" cy="19" r="19" fill="#e4e9f2" />
                <path d="M17.500 8v12.500l10 6" fill="none" stroke="#002a6c" strokeWidth="3.500" />
              </svg>
            </button>
            <button type="button" aria-label="Share">
              <svg width="39" height="32" viewBox="0 0 39 32" fill="#e4e9f2"><path d="M24 0l15 15-15 15v-9C13 21 6 24 0 32 2 20 9 10 24 8z" /></svg>
            </button>
          </TopActions>
        </PlayerTop>
        <ExitHint>
          <span>Press</span>
          <kbd>Esc</kbd>
          <span>to exit full screen</span>
        </ExitHint>
        <PlayerControls />
      </Screen>
    </>
  );
}
